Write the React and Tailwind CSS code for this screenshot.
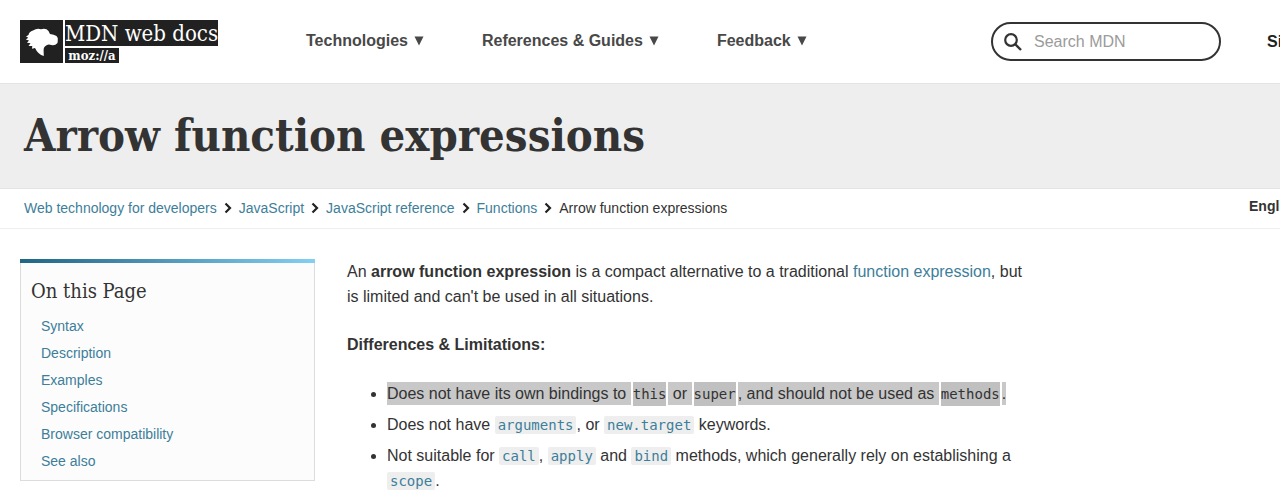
import React from "react";

const link = "text-[#3d7e9a]";
const slab = "font-['DejaVu_Serif_Condensed','DejaVu_Serif',serif]";

function Logo() {
  return (
    <a href="#home" aria-label="MDN web docs" className="flex items-start gap-[2px] text-white">
      <svg viewBox="0 0 43 43" className="h-[43px] w-[43px] bg-[#212121]" aria-hidden="true">
        <path
          fill="currentColor"
          d="M6 16.5 L8.5 15 Q9 11.5 13 10.5 Q17 8 21 9.3 Q26 7.8 28.5 11 L30 14 Q34 14.3 36.5 16 Q38.8 18.5 37.8 20.5 L37.5 23 Q35 25.8 31.5 25 Q28.5 23.8 27 25 Q23.5 26.5 23.6 30 L23.8 36 Q18 34.5 15 28 L12 28.8 L12.3 26 L8.5 26 L10.5 23.3 L7 22.8 L9 20.5 L5.8 19.5 L8.3 17.8 Z"
        />
      </svg>
      <span className="flex flex-col items-start gap-[2px]">
        <span className={`${slab} flex h-[26px] w-[153px] items-center justify-center whitespace-nowrap bg-[#212121] text-[22px]`}>
          MDN web docs
        </span>
        <span className={`${slab} flex h-[15px] w-[54px] items-center justify-center bg-[#212121] text-[13px] font-bold`}>
          moz://a
        </span>
      </span>
    </a>
  );
}

function Chevron() {
  return (
    <svg viewBox="0 0 8 12" className="h-3 w-2 shrink-0" aria-hidden="true">
      <path d="M1.5 1.5 L6 6 L1.5 10.5" fill="none" stroke="#222" strokeWidth="2.2" />
    </svg>
  );
}

function Code({ children }) {
  return (
    <code className="rounded-[2px] bg-[#eee] px-[3px] py-px font-['DejaVu_Sans_Mono',monospace] text-[14px] leading-none">
      <a href="#reference" className={link}>{children}</a>
    </code>
  );
}

function Mark({ children }) {
  return <span className="bg-[#c8c8c8] py-[3px]">{children}</span>;
}

function MarkedCode({ children }) {
  return (
    <code className="mx-[2px] bg-[#c0c0c0] py-1 font-['DejaVu_Sans_Mono',monospace] text-[14px] leading-none">
      {children}
    </code>
  );
}

const crumbs = ["Web technology for developers", "JavaScript", "JavaScript reference", "Functions"];
const sections = ["Syntax", "Description", "Examples", "Specifications", "Browser compatibility", "See also"];

export default function App() {
  return (
    <div className="overflow-x-hidden bg-white font-['Liberation_Sans',Arial,sans-serif] text-base text-[#333]">
      <header className="flex h-[84px] items-start border-b border-[#e3e3e3] pl-5 pt-5">
        <Logo />
        <nav className="ml-[88px] flex gap-[58px] pt-[9px] font-bold text-[#484848]">
          {["Technologies", "References & Guides", "Feedback"].map((t) => (
            <button key={t} className="flex items-center gap-1.5 whitespace-nowrap font-bold">
              {t}
              <svg viewBox="0 0 10 10" className="h-[10px] w-[10px]" aria-hidden="true">
                <path d="M0.5 0.5H9.5L5 9.5Z" fill="currentColor" />
              </svg>
            </button>
          ))}
        </nav>
        <label className="ml-auto mt-[2px] flex h-[39px] w-[230px] shrink-0 items-center gap-3 rounded-full border-2 border-[#333] pl-[11px]">
          <svg viewBox="0 0 18 18" className="h-[18px] w-[18px] shrink-0" aria-hidden="true">
            <circle cx="7" cy="7" r="5.8" fill="none" stroke="#333" strokeWidth="2.2" />
            <path d="M11 11 L17 17" stroke="#333" strokeWidth="2.4" />
          </svg>
          <input type="search" aria-label="Search MDN" placeholder="Search MDN" className="w-40 bg-transparent outline-none placeholder:text-[#9b9b9b]" />
        </label>
        <a href="#signin" className="ml-[46px] w-[13px] shrink-0 whitespace-nowrap pt-[10px] font-bold text-[#222]">Sign in</a>
      </header>

      <div className="flex h-[105px] items-center border-b border-[#e3e3e3] bg-[#eee] px-6">
        <h1 className={`${slab} whitespace-nowrap text-[45px] font-bold leading-[48px]`}>Arrow function expressions</h1>
      </div>

      <div className="flex h-10 items-center justify-between border-b border-[#eee] pb-px pl-6 text-sm">
        <nav aria-label="Breadcrumb">
          <ol className="flex items-center whitespace-nowrap">
            {crumbs.map((c) => (
              <li key={c} className="flex items-center">
                <a href="#crumb" className={link}>{c}</a>
                <span className="mx-[7px] flex"><Chevron /></span>
              </li>
            ))}
            <li>Arrow function expressions</li>
          </ol>
        </nav>
        <button className="flex w-[31px] shrink-0 whitespace-nowrap pb-1 font-bold">English ▼</button>
      </div>

      <div className="flex items-start gap-8 pl-5 pt-[30px]">
        <aside className="w-[295px] shrink-0 border border-t-0 border-[#dcdcdc] bg-[#fcfcfc] pb-[5px]">
          <div className="-mx-px h-1 bg-linear-to-r from-[#206584] to-[#83d0f2]" />
          <h2 className={`${slab} px-2.5 pt-[14px] text-[20px] leading-7`}>On this Page</h2>
          <ul className="mt-2 pl-5 text-sm leading-[27px]">
            {sections.map((s) => (
              <li key={s}><a href="#section" className={link}>{s}</a></li>
            ))}
          </ul>
        </aside>

        <main className="w-[690px] leading-[25px]">
          <p>
            An <strong>arrow function expression</strong> is a compact alternative to a traditional{" "}
            <a href="#function" className={link}>function expression</a>, but is limited and can't be used in all situations.
          </p>
          <p className="mt-[23px] font-bold">Differences &amp; Limitations:</p>
          <ul className="mt-6 list-disc space-y-1.5 pl-10">
            <li className="whitespace-nowrap">
              <Mark>Does not have its own bindings to </Mark>
              <MarkedCode>this</MarkedCode>
              <Mark> or </Mark>
              <MarkedCode>super</MarkedCode>
              <Mark>, and should not be used as </Mark>
              <MarkedCode>methods</MarkedCode>
              <Mark>.</Mark>
            </li>
            <li>Does not have <Code>arguments</Code>, or <Code>new.target</Code> keywords.</li>
            <li>
              Not suitable for <Code>call</Code>, <Code>apply</Code> and <Code>bind</Code> methods, which generally rely on establishing a <Code>scope</Code>.
            </li>
          </ul>
        </main>
      </div>
    </div>
  );
}
